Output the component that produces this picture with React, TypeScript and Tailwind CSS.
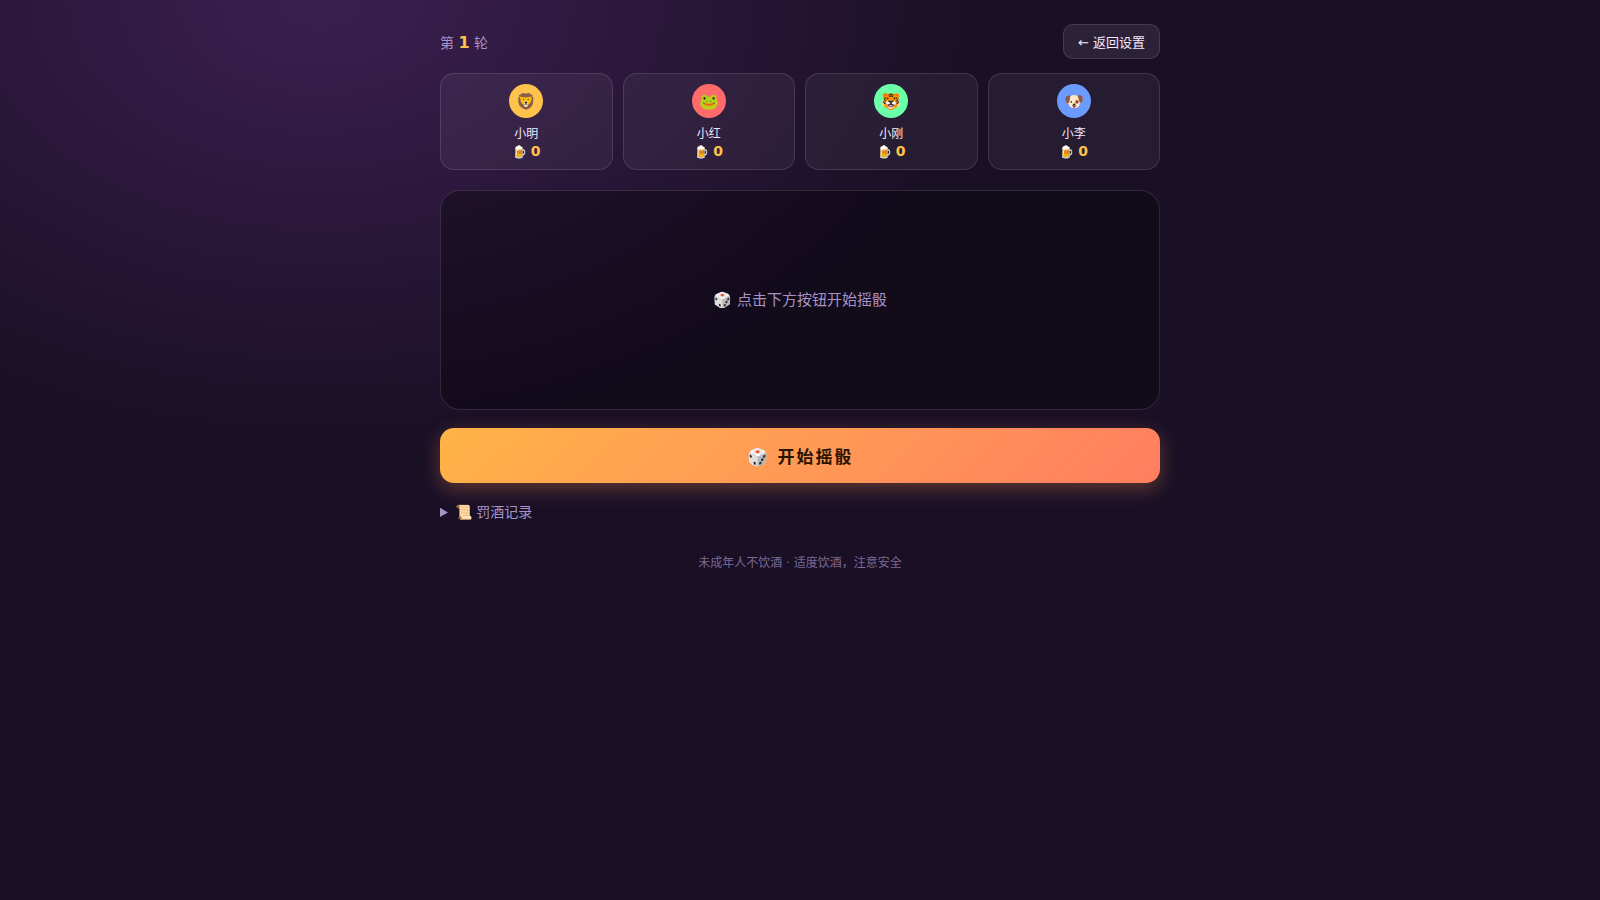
const players = [
  { name: "小明", emoji: "🦁", color: "bg-[#ffc24b]", drinks: 0 },
  { name: "小红", emoji: "🐸", color: "bg-[#ff6b6b]", drinks: 0 },
  { name: "小刚", emoji: "🐯", color: "bg-[#6bffa8]", drinks: 0 },
  { name: "小李", emoji: "🐶", color: "bg-[#6b9bff]", drinks: 0 },
];

export default function App() {
  return (
    <div className="min-h-screen bg-[#1a1026] bg-[radial-gradient(1200px_800px_at_20%_0%,#3b1f50,transparent_55%)] font-['DejaVu_Sans','Noto_Sans_CJK_SC',sans-serif] text-[#f3e9ff]">
      <main className="mx-auto max-w-[760px] px-5 pt-6 pb-10">
        <header className="mb-3.5 flex items-center justify-between">
          <div className="pt-0.5 text-sm leading-[22px] text-[#a892c8]">
            第 <b className="text-base text-[#ffc24b]">1</b> 轮
          </div>
          <button
            type="button"
            className="rounded-[10px] border border-white/12 bg-white/8 px-3.5 pt-2.5 pb-[7px] text-[13px] leading-4"
          >
            ← 返回设置
          </button>
        </header>

        <section className="mb-5 grid grid-cols-4 gap-2.5">
          {players.map((player) => (
            <div
              key={player.name}
              className="flex flex-col items-center rounded-[14px] border border-white/12 bg-white/5 p-2.5"
            >
              <div
                className={`mb-1.5 flex size-[34px] items-center justify-center rounded-full pt-px text-base leading-[26px] ${player.color}`}
              >
                {player.emoji}
              </div>
              <div className="text-xs leading-5">{player.name}</div>
              <div className="h-[15px] text-xs leading-[15px] text-[#ffc24b]">
                🍺 <b className="text-sm leading-[15px]">{player.drinks}</b>
              </div>
            </div>
          ))}
        </section>

        <section className="flex h-[220px] items-center justify-center rounded-[20px] border border-white/12 bg-black/30">
          <p className="text-[15px] text-[#a892c8]">🎲 点击下方按钮开始摇骰</p>
        </section>

        <button
          type="button"
          className="mt-[18px] w-full rounded-[14px] bg-linear-135 from-[#ffb347] to-[#ff7e5f] pt-[17px] pb-3.5 text-[17px] leading-6 font-bold tracking-[2px] text-[#2a1400] shadow-[0_6px_20px_rgba(255,150,80,0.3)]"
        >
          🎲 开始摇骰
        </button>

        <details className="mt-[18px] text-sm leading-[22px] text-[#a892c8]">
          <summary className="cursor-pointer">📜 罚酒记录</summary>
        </details>

        <footer className="mt-8 text-center text-xs leading-4 text-[#a892c8]/70">
          未成年人不饮酒 · 适度饮酒，注意安全
        </footer>
      </main>
    </div>
  );
}
